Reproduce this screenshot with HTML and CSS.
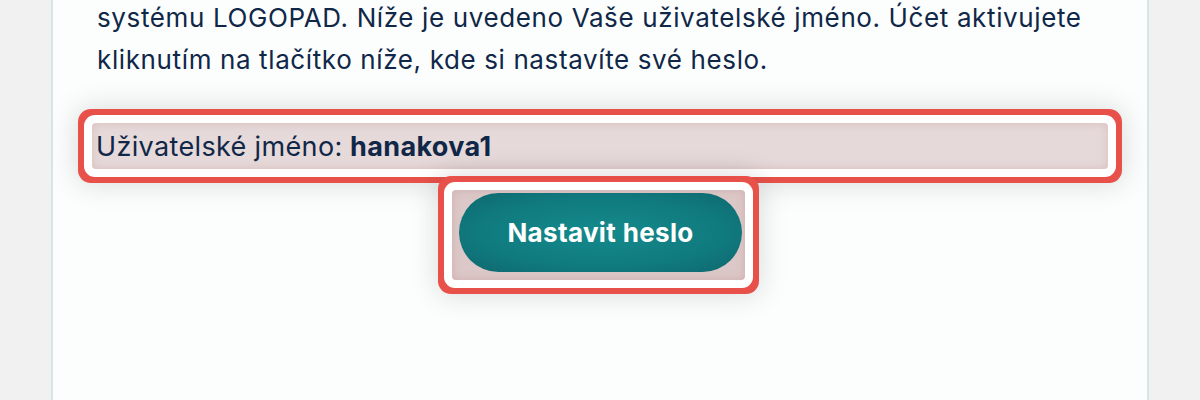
FILE: index.html
```html
<!DOCTYPE html>
<html lang="cs">
<head>
<meta charset="utf-8">
<title>LOGOPAD</title>
<link rel="stylesheet" href="styles.css">
</head>
<body>
<div class="page">
  <div class="card">
    <p class="intro">systému LOGOPAD. Níže je uvedeno Vaše uživatelské jméno. Účet aktivujete<br>kliknutím na tlačítko níže, kde si nastavíte své heslo.</p>
    <div class="user-row">Uživatelské jméno: <strong>hanakova1</strong></div>
    <div class="btn-wrap">
      <div class="btn-cell">
        <a class="btn" href="#">Nastavit heslo</a>
      </div>
    </div>
  </div>
</div>
</body>
</html>
```

FILE: styles.css
```css
html, body {
  margin: 0;
  padding: 0;
  height: 100%;
  overflow: hidden;
  background: #f1f1f1;
  font-family: Inter, "Noto Sans", "Liberation Sans", sans-serif;
  color: #102748;
}

.page {
  padding: 0 51px;
  height: 100%;
  box-sizing: border-box;
}

.card {
  background: #fcfefe;
  border-left: 2px solid #d4e7e6;
  border-right: 2px solid #d4e7e6;
  height: calc(100% + 40px);
  box-sizing: border-box;
  padding: 0 44px;
}

.intro {
  margin: -3px 0 0;
  font-size: 26px;
  letter-spacing: 0.62px;
  line-height: 42px;
  white-space: nowrap;
}

.user-row {
  margin: 42px -5px 0;
  padding: 0 4px;
  height: 46px;
  display: flex;
  align-items: center;
  gap: 0.28em;
  font-size: 27px;
  letter-spacing: 0.35px;
  border-radius: 4px;
  background: #e5d9d9;
  box-shadow:
    inset 0 0 10px rgba(190, 120, 120, 0.28),
    0 0 0 8px #ffffff,
    0 0 0 14px #e8514a,
    0 0 28px 16px rgba(0, 0, 0, 0.13);
}

.user-row strong {
  font-weight: 700;
}

.btn-wrap {
  display: flex;
  justify-content: center;
  margin-top: 21px;
  padding-right: 3px;
}

.btn-cell {
  background: #dcc8c8;
  padding: 3px 3px 8px 7px;
  border-radius: 4px;
  box-shadow:
    inset 0 0 10px rgba(180, 110, 110, 0.28),
    0 0 0 8px #ffffff,
    0 0 0 14px #e8514a,
    0 0 28px 16px rgba(0, 0, 0, 0.13);
}

.btn {
  display: flex;
  align-items: center;
  justify-content: center;
  width: 283px;
  height: 79px;
  border-radius: 40px;
  background: radial-gradient(ellipse at center, #148a8c 0%, #107b7f 60%, #0e676e 100%);
  color: #ffffff;
  font-weight: 700;
  font-size: 26px;
  letter-spacing: 0.35px;
  text-decoration: none;
}
```
